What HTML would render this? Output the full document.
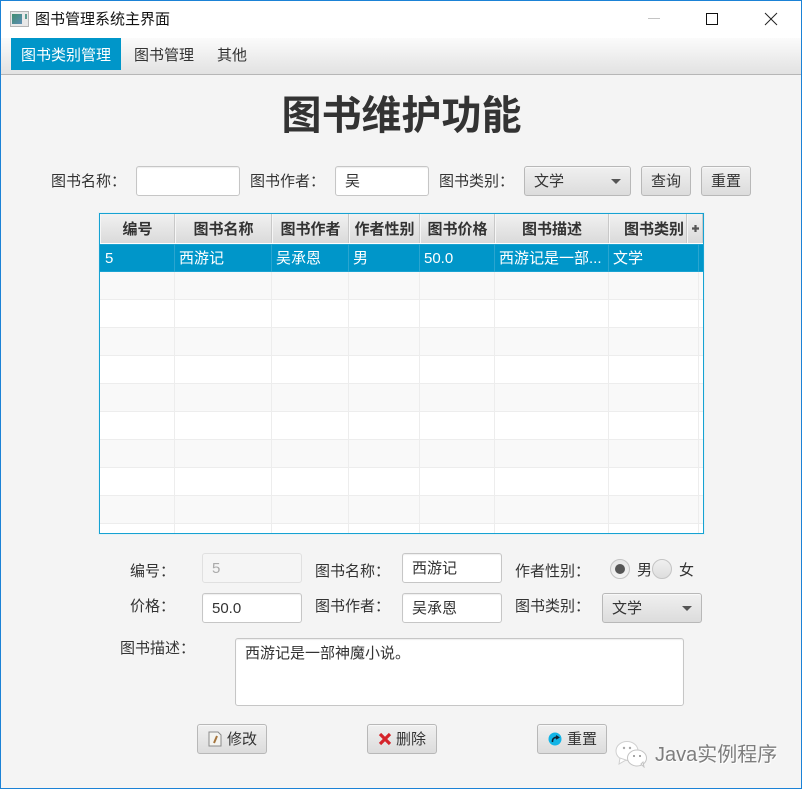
<!DOCTYPE html>
<html lang="zh">
<head>
<meta charset="utf-8">
<style>
html,body{margin:0;padding:0;background:#f4f4f4}
#w{position:relative;width:802px;height:789px;overflow:hidden;background:#f4f4f4;font-family:"Liberation Sans","Noto Sans CJK SC",sans-serif;font-size:15px;color:#333}
#w div{position:absolute;box-sizing:border-box;white-space:nowrap}
.l{line-height:20px;height:20px}
.f{background:#fff;border:1px solid #c6c6c6;border-radius:3px;height:30px;line-height:30px;padding-left:9px;box-shadow:inset 0 1px 1px #eee}
.b{height:30px;border:1px solid #b8b8b8;border-radius:3px;background:linear-gradient(#f0f0f0,#dcdcdc);line-height:30px;text-align:center;box-shadow:inset 0 1px 0 #f8f8f8}
.h{top:0;height:29px;background:linear-gradient(#f1f1f1,#dadada);border-right:1px solid #c8c8c8;border-left:1px solid #f6f6f6;text-align:center;line-height:31px;font-weight:bold;color:#333;font-size:15px}
.r{left:0;width:603px;height:28px;background:#f9f9f9}
.g{left:0;width:603px;height:1px;background:#ededed}
.c{top:31px;height:290px;width:1px;background:#ededed}
.s{top:30px;width:1px;height:28px;background:#2aa5d0}
.t{top:30px;height:28px;line-height:30px;color:#fff;font-size:15px}
.arrow{width:0;height:0;border-left:5px solid transparent;border-right:5px solid transparent;border-top:5px solid #555}
</style>
</head>
<body>
<div id="w">
  <!-- title bar -->
  <div style="left:0;top:0;width:802px;height:39px;background:#fff"></div>
  <div style="left:10px;top:11px;width:19px;height:16px;background:#e8e8e8;border:1px solid #b4b4b4"></div>
  <div style="left:12px;top:14px;width:10px;height:10px;background:linear-gradient(135deg,#3f8d6f,#5f8fb5)"></div>
  <div style="left:25px;top:14px;width:2px;height:5px;background:#5a9a90"></div>
  <div class="l" style="left:35px;top:10px;color:#111;font-size:15px">图书管理系统主界面</div>
  <div style="left:648px;top:18px;width:12px;height:1px;background:#c4c4c4"></div>
  <div style="left:706px;top:13px;width:12px;height:12px;border:1px solid #111"></div>
  <svg style="position:absolute;left:764px;top:12px" width="14" height="14"><path d="M1 1L13 13M13 1L1 13" stroke="#222" stroke-width="1" fill="none"/></svg>

  <!-- menu bar -->
  <div style="left:1px;top:38px;width:800px;height:37px;background:linear-gradient(#fbfbfb,#e2e2e2);border-bottom:1px solid #b6b6b6"></div>
  <div style="left:11px;top:38px;width:110px;height:32px;background:#0096c9;color:#fff;text-align:center;line-height:35px;font-size:15px">图书类别管理</div>
  <div class="l" style="left:134px;top:46px">图书管理</div>
  <div class="l" style="left:217px;top:46px">其他</div>

  <!-- heading -->
  <div style="left:281px;top:88px;width:241px;height:54px;line-height:56px;font-size:40px;font-weight:bold;color:#333;text-align:center">图书维护功能</div>

  <!-- search row -->
  <div class="l" style="left:51px;top:172px">图书名称：</div>
  <div class="f" style="left:136px;top:166px;width:104px"></div>
  <div class="l" style="left:250px;top:172px">图书作者：</div>
  <div class="f" style="left:335px;top:166px;width:94px">吴</div>
  <div class="l" style="left:439px;top:172px">图书类别：</div>
  <div class="b" style="left:524px;top:166px;width:107px;text-align:left;padding-left:9px">文学</div>
  <div class="arrow" style="left:611px;top:179px"></div>
  <div class="b" style="left:641px;top:166px;width:50px">查询</div>
  <div class="b" style="left:701px;top:166px;width:50px">重置</div>

  <!-- table -->
  <div style="left:98px;top:212px;width:607px;height:323px;background:#e6f1f5"></div>
  <div style="left:99px;top:213px;width:605px;height:321px;background:#fff;overflow:hidden">
    <div style="left:1px;top:1px;width:603px;height:319px;overflow:hidden">
    <div class="r" style="top:58px"></div>
    <div class="r" style="top:114px"></div>
    <div class="r" style="top:170px"></div>
    <div class="r" style="top:226px"></div>
    <div class="r" style="top:282px"></div>
    <div class="g" style="top:85px"></div>
    <div class="g" style="top:113px"></div>
    <div class="g" style="top:141px"></div>
    <div class="g" style="top:169px"></div>
    <div class="g" style="top:197px"></div>
    <div class="g" style="top:225px"></div>
    <div class="g" style="top:253px"></div>
    <div class="g" style="top:281px"></div>
    <div class="g" style="top:309px"></div>
    <div class="c" style="left:74px"></div>
    <div class="c" style="left:171px"></div>
    <div class="c" style="left:248px"></div>
    <div class="c" style="left:319px"></div>
    <div class="c" style="left:394px"></div>
    <div class="c" style="left:508px"></div>
    <div class="c" style="left:598px"></div>

    <div class="h" style="left:0;width:75px">编号</div>
    <div class="h" style="left:75px;width:97px">图书名称</div>
    <div class="h" style="left:172px;width:77px">图书作者</div>
    <div class="h" style="left:249px;width:71px">作者性别</div>
    <div class="h" style="left:320px;width:75px">图书价格</div>
    <div class="h" style="left:395px;width:114px">图书描述</div>
    <div class="h" style="left:509px;width:78px;padding-left:12px">图书类别</div>
    <div class="h" style="left:587px;width:16px"></div>
    <svg style="position:absolute;left:591px;top:10px" width="9" height="9"><path d="M4.500 1V8M1 4.500H8" stroke="#555" stroke-width="2.200" fill="none"/></svg>

    <div style="left:0;top:30px;width:603px;height:28px;background:#0096c9;border-top:1px solid #1aa3d2;border-bottom:1px solid #1aa3d2"></div>
    <div class="s" style="left:74px"></div>
    <div class="s" style="left:171px"></div>
    <div class="s" style="left:248px"></div>
    <div class="s" style="left:319px"></div>
    <div class="s" style="left:394px"></div>
    <div class="s" style="left:508px"></div>
    <div class="s" style="left:598px"></div>
    <div class="t" style="left:5px">5</div>
    <div class="t" style="left:79px">西游记</div>
    <div class="t" style="left:176px">吴承恩</div>
    <div class="t" style="left:253px">男</div>
    <div class="t" style="left:324px">50.0</div>
    <div class="t" style="left:399px">西游记是一部...</div>
    <div class="t" style="left:513px">文学</div>
    </div>
  </div>
  <div style="left:99px;top:213px;width:605px;height:1px;background:#16a2d2"></div>
  <div style="left:99px;top:533px;width:605px;height:1px;background:#16a2d2"></div>
  <div style="left:99px;top:213px;width:1px;height:321px;background:#16a2d2"></div>
  <div style="left:703px;top:213px;width:1px;height:321px;background:#16a2d2"></div>

  <!-- form -->
  <div class="l" style="left:130px;top:562px">编号：</div>
  <div class="f" style="left:202px;top:553px;width:100px;background:#f5f5f5;border-color:#e0e0e0;color:#aaa;box-shadow:none">5</div>
  <div class="l" style="left:315px;top:562px">图书名称：</div>
  <div class="f" style="left:402px;top:553px;width:100px">西游记</div>
  <div class="l" style="left:515px;top:562px">作者性别：</div>
  <div style="left:610px;top:559px;width:20px;height:20px;border-radius:50%;border:1px solid #c4c4c4;background:linear-gradient(#e6e6e6,#f3f3f3)"></div>
  <div style="left:615px;top:564px;width:10px;height:10px;border-radius:50%;background:#555"></div>
  <div class="l" style="left:637px;top:561px">男</div>
  <div style="left:652px;top:559px;width:20px;height:20px;border-radius:50%;border:1px solid #c4c4c4;background:linear-gradient(#f0f0f0,#dedede)"></div>
  <div class="l" style="left:679px;top:561px">女</div>

  <div class="l" style="left:130px;top:597px">价格：</div>
  <div class="f" style="left:202px;top:593px;width:100px">50.0</div>
  <div class="l" style="left:315px;top:597px">图书作者：</div>
  <div class="f" style="left:402px;top:593px;width:100px">吴承恩</div>
  <div class="l" style="left:515px;top:597px">图书类别：</div>
  <div class="b" style="left:602px;top:593px;width:100px;text-align:left;padding-left:9px">文学</div>
  <div class="arrow" style="left:682px;top:606px"></div>

  <div class="l" style="left:120px;top:639px">图书描述：</div>
  <div class="f" style="left:235px;top:638px;width:449px;height:68px;line-height:26px;padding-top:2px">西游记是一部神魔小说。</div>

  <!-- buttons -->
  <div class="b" style="left:197px;top:724px;width:70px;text-align:left;padding-left:29px">修改</div>
  <svg style="position:absolute;left:208px;top:731px" width="14" height="16"><path d="M1 1H10L13 4V15H1Z" fill="#f4f4f0" stroke="#8a8a8a"/><path d="M9 5L6 12" stroke="#a5743c" stroke-width="2"/></svg>
  <div class="b" style="left:367px;top:724px;width:70px;text-align:left;padding-left:28px">删除</div>
  <svg style="position:absolute;left:378px;top:732px" width="14" height="14"><path d="M2 2L12 12M12 2L2 12" stroke="#d5232a" stroke-width="3.200" fill="none"/></svg>
  <div class="b" style="left:537px;top:724px;width:70px;text-align:left;padding-left:29px">重置</div>
  <svg style="position:absolute;left:548px;top:732px" width="14" height="15"><circle cx="7" cy="7" r="6.500" fill="#12b4e6"/><path d="M4.500 10C4 7 6 5 9.500 5.500M8 3.800L10.500 5.500L8 7" fill="none" stroke="#123" stroke-width="1.500"/></svg>

  <!-- watermark -->
  <svg style="position:absolute;left:615px;top:738px" width="34" height="30"><ellipse cx="12" cy="13" rx="11" ry="9.500" fill="#fff" stroke="#d0d0d0"/><path d="M5 20L4 26L11 22Z" fill="#fff" stroke="#d0d0d0"/><ellipse cx="22" cy="20" rx="9.500" ry="8" fill="#fff" stroke="#c4c4c4"/><path d="M26 26L29 29L28 24Z" fill="#fff" stroke="#c4c4c4"/><circle cx="9" cy="10" r="1.200" fill="#aaa"/><circle cx="15" cy="10" r="1.200" fill="#aaa"/><circle cx="19" cy="18" r="1" fill="#888"/><circle cx="25" cy="18" r="1" fill="#888"/></svg>
  <div class="l" style="left:655px;top:744px;font-size:20px;line-height:22px;height:22px;color:#7d7d7d;text-shadow:1px 1px 0 #fff">Java实例程序</div>

  <!-- window border -->
  <div style="left:0;top:0;width:802px;height:789px;border:1px solid #1b82d6;pointer-events:none"></div>
</div>
</body>
</html>
